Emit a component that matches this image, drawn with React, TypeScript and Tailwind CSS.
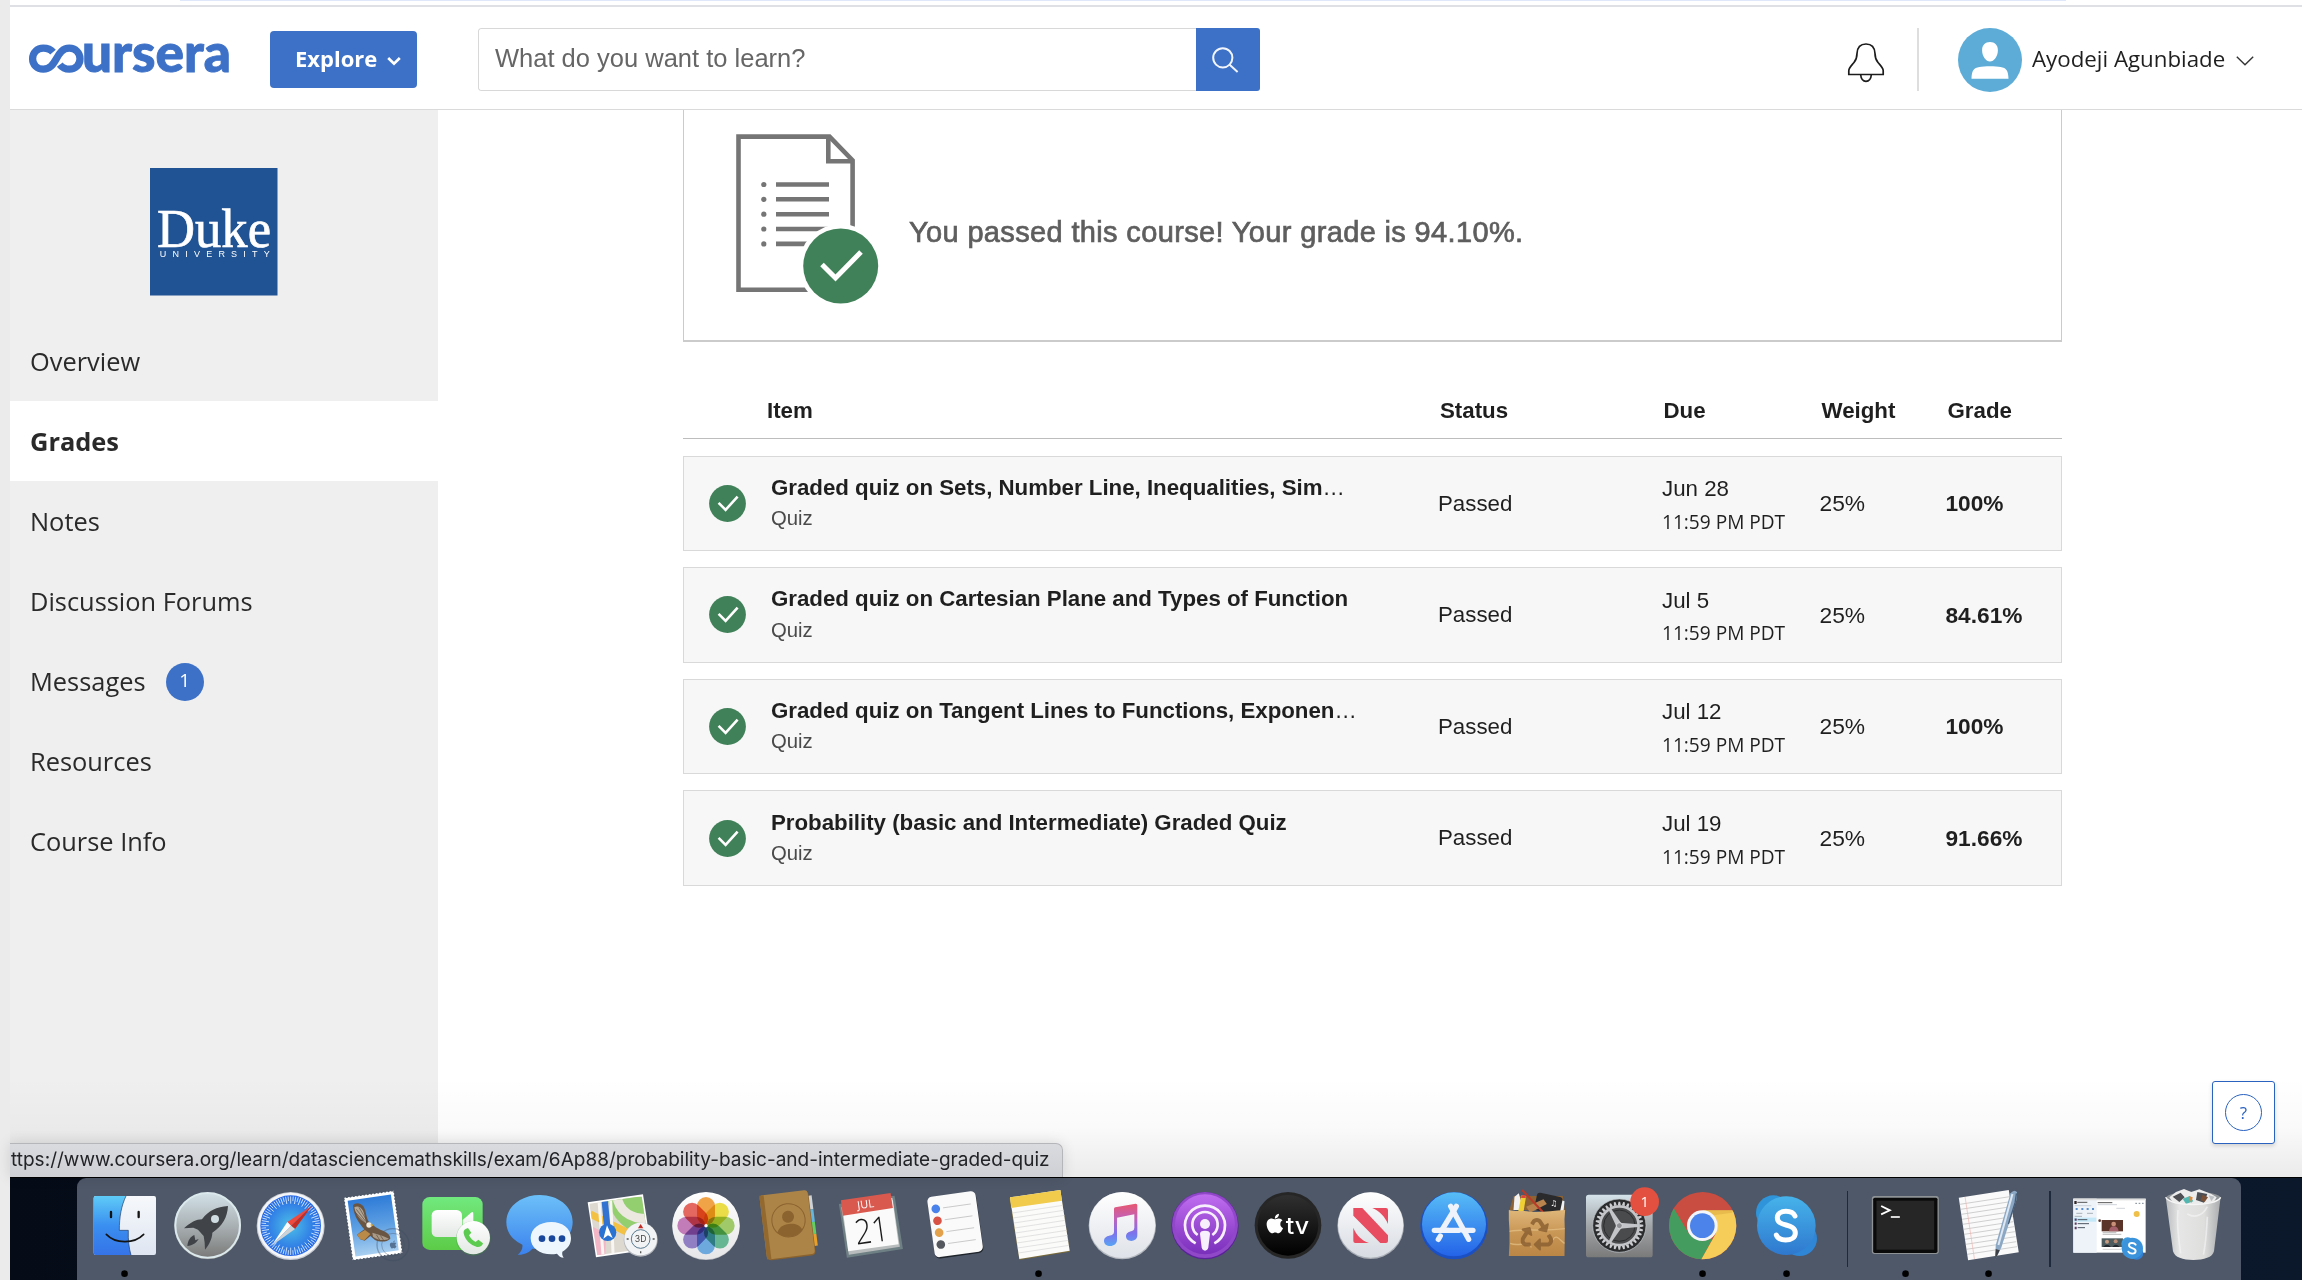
import React from 'react';
import { FaApple, FaRecycle } from 'react-icons/fa';

const HELV = "font-['Liberation_Sans',Arial,sans-serif]";
const OPEN = "font-['Open_Sans',sans-serif]";

/* ---------- Header ---------- */

function CourseraLogo() {
  return (
    <svg className="h-[70px] w-[216px]" viewBox="28 22 216 70" overflow="visible" aria-label="coursera">
      <path
        d="M53 51.2 C50.5 48.2 47 47.2 43.3 47.2 C37 47.2 32.600 51.800 32.600 57.800 C32.600 63.800 37 68.200 43.300 68.200 C50 68.200 53 63.500 56.300 57.800 C59.500 52 62.600 47.200 69.300 47.200 C75.500 47.200 80 51.800 80 57.800 C80 63.800 75.500 68.200 69.300 68.200 C65 68.200 62 66.500 59.800 63.600"
        fill="none"
        stroke="#3d71c7"
        strokeWidth="7.300"
      />
      <text
        x="82"
        y="71"
        textLength="149"
        lengthAdjust="spacingAndGlyphs"
        fill="#3d71c7"
        stroke="#3d71c7"
        strokeWidth="0.900"
        fontFamily="Lato"
        fontWeight="900"
        fontSize="53"
      >
        ursera
      </text>
    </svg>
  );
}

function Header() {
  return (
    <header className="flex h-[103px] shrink-0 items-center border-b-[1.500px] border-[#dadada] bg-white pt-[3px] pl-[18px]">
      <div className="-mt-[3px]">
        <CourseraLogo />
      </div>
      <button className={`${OPEN} ml-[26px] flex h-[57px] w-[147px] items-center rounded-[4px] bg-[#3d71c7] pb-[2px] pl-[25px] text-[22px] font-bold text-white`}>
        Explore
        <svg className="mt-[5px] ml-[10px] h-[10px] w-[14px]" viewBox="0 0 14 10" fill="none" stroke="white" strokeWidth="2.700">
          <path d="M1.200 2 L7 7.600 L12.800 2" />
        </svg>
      </button>
      <div className="ml-[61px] flex h-[63px] w-[782px] overflow-hidden rounded-[3px]">
        <div className={`${HELV} flex flex-1 items-center rounded-l-[3px] border border-r-0 border-[#d8d8d8] pb-[2px] pl-[16px] text-[25.500px] text-[#666666]`}>
          What do you want to learn?
        </div>
        <div className="flex w-[64px] items-center justify-center bg-[#3d71c7]">
          <svg className="mr-[6px] h-[26px] w-[28px]" viewBox="0 0 28 26" fill="none" stroke="#f2f5fb" strokeWidth="2">
            <circle cx="11.800" cy="10.800" r="9.600" />
            <path d="M18.400 17.600 L26.600 25" />
          </svg>
        </div>
      </div>
      <svg className="mt-[5px] ml-[587px] h-[41px] w-[38px]" viewBox="0 0 38 41" fill="none" stroke="#1c1c1c" strokeWidth="1.700">
        <path d="M1.800 32.500 V28.500 C2 25.500 4.500 23.500 7 20.500 C9.500 17.500 10 15 10 11.500 C10.300 5.500 13.500 2 19 2 C24.500 2 27.700 5.500 28 11.500 C28 15 28.500 17.500 31 20.500 C33.500 23.500 36 25.500 36.200 28.500 V32.500 Z" />
        <path d="M13.700 32.800 C13.900 36.500 16 39.300 19 39.300 C22 39.300 24.100 36.500 24.300 32.800" />
      </svg>
      <div className="ml-[32px] h-[63px] w-[2px] bg-[#dedede]" />
      <svg className="ml-[39px] size-[64px]" viewBox="0 0 64 64">
        <circle cx="32" cy="32" r="32" fill="#5dacd7" />
        <path d="M32 14 C27.300 14 24 17 24.100 22.500 C24.200 28.500 28 33.500 32 33.500 C36 33.500 39.800 28.500 39.900 22.500 C40 17 36.700 14 32 14 Z" fill="white" />
        <path d="M13.500 50.800 C13.700 42.500 15.500 39.800 21.500 38.900 C26 38 38 38 42.500 38.900 C48.500 39.800 50.300 42.500 50.500 50.800 Z" fill="white" />
      </svg>
      <span className={`${OPEN} ml-[10px] pb-[1px] text-[22.300px] text-[#1f1f1f]`}>Ayodeji Agunbiade</span>
      <svg className="mt-[3px] ml-[11px] h-[10px] w-[18px]" viewBox="0 0 18 10" fill="none" stroke="#333" strokeWidth="1.400">
        <path d="M0.800 0.800 L9 8.800 L17.200 0.800" />
      </svg>
    </header>
  );
}

/* ---------- Sidebar ---------- */

const NAV = ['Overview', 'Grades', 'Notes', 'Discussion Forums', 'Messages', 'Resources', 'Course Info'];

function Sidebar() {
  return (
    <aside className="w-[427.500px] shrink-0 bg-[#efefef] pt-[58px]">
      <svg className="ml-[140px] block size-[127.500px]" viewBox="0 0 127.500 127.500">
        <rect width="127.500" height="127.500" fill="#205393" />
        <text x="7" y="78.500" textLength="114" lengthAdjust="spacingAndGlyphs" fill="white" stroke="white" strokeWidth="0.700" fontFamily="Liberation Serif" fontSize="54.500">Duke</text>
        <text x="9.800" y="88.600" textLength="110" fill="white" fontFamily="Liberation Sans" fontSize="9">UNIVERSITY</text>
      </svg>
      <nav className="mt-[26px]">
        {NAV.map((label) => (
          <div
            key={label}
            className={`${OPEN} flex h-[79.900px] items-center pl-[20px] text-[25.400px] ${
              label === 'Grades' ? 'bg-white font-bold text-[#2a2a2a]' : 'text-[#2a2a2a]'
            }`}
          >
            {label}
            {label === 'Messages' && (
              <span className="mt-[2px] ml-[20px] flex size-[38px] items-center justify-center rounded-full bg-[#3d71c7] pb-[3px] text-[19px] text-white">
                1
              </span>
            )}
          </div>
        ))}
      </nav>
    </aside>
  );
}

/* ---------- Grades ---------- */

function PassedDocument() {
  return (
    <svg className="h-[176px] w-[150px] shrink-0" viewBox="733 132 150 176" fill="none" stroke="#757575" strokeWidth="4.600">
      <path d="M738.500 136.600 H829.500 L852.600 160.500 V289.700 H738.500 Z" />
      <path d="M828.300 136 V161.300 H853" />
      {[184.5, 199.3, 214.2, 229, 243.9].map((y) => (
        <g key={y}>
          <path d={`M776 ${y} H829`} />
          <circle cx="763.800" cy={y} r="2.600" fill="#757575" stroke="none" />
        </g>
      ))}
      <circle cx="840.700" cy="266" r="42" fill="white" stroke="none" />
      <circle cx="840.700" cy="266" r="37.500" fill="#418159" stroke="none" />
      <path d="M822 264.500 L835.500 278 L861 252" stroke="white" strokeWidth="5" />
    </svg>
  );
}

function CheckBadge() {
  return (
    <svg className="size-[37px]" viewBox="0 0 37 37" fill="none">
      <circle cx="18.500" cy="18.500" r="18.400" fill="#418159" />
      <path d="M9.600 17.800 L16.600 24.800 L28.600 11.600" stroke="white" strokeWidth="2.600" />
    </svg>
  );
}

const ROWS = [
  { title: 'Graded quiz on Sets, Number Line, Inequalities, Sim', cut: true, due: 'Jun 28', grade: '100%' },
  { title: 'Graded quiz on Cartesian Plane and Types of Function', cut: false, due: 'Jul 5', grade: '84.61%' },
  { title: 'Graded quiz on Tangent Lines to Functions, Exponen', cut: true, due: 'Jul 12', grade: '100%' },
  { title: 'Probability (basic and Intermediate) Graded Quiz', cut: false, due: 'Jul 19', grade: '91.66%' },
];

function Grades() {
  return (
    <main className={`${HELV} w-[1379px] shrink-0 text-[22.300px] text-[#1f1f1f]`}>
      <section className="flex h-[232px] border-x border-b-2 border-[#cbcbcb] pl-[49px]">
        <div className="mt-[22px]">
          <PassedDocument />
        </div>
        <p className="mt-[102px] ml-[26px] h-[40px] text-[29px] leading-[40px] tracking-[0.350px] whitespace-nowrap text-[#5e5e5e] [-webkit-text-stroke:0.700px_#5e5e5e]">
          You passed this course! Your grade is 94.10%.
        </p>
      </section>
      <div className="grid h-[96.500px] grid-cols-[673px_223.500px_158px_126px_1fr] border-b border-[#bdbdbd] pt-[55px] pl-[84px] leading-[27px] font-bold">
        <span>Item</span>
        <span>Status</span>
        <span>Due</span>
        <span>Weight</span>
        <span>Grade</span>
      </div>
      <div className="mt-[17px] flex flex-col gap-[16px]">
        {ROWS.map((r) => (
          <div
            key={r.due}
            className="grid h-[95.600px] grid-cols-[62px_667px_224px_157.500px_126px_1fr] items-center border border-[#d9d9d9] bg-[#f7f7f7] pl-[25px]"
          >
            <CheckBadge />
            <div className="leading-[31.400px]">
              <div className="tracking-[-0.020px] font-bold">
                {r.title}
                {r.cut && <span className="font-normal">…</span>}
              </div>
              <div className="text-[20.300px] text-[#4a4a4a]">Quiz</div>
            </div>
            <span>Passed</span>
            <div className="pt-[5px] leading-[32.700px]">
              <div>{r.due}</div>
              <div className={`${OPEN} text-[19.100px]`}>11:59 PM PDT</div>
            </div>
            <span className="text-[22.800px]">25%</span>
            <span className="text-[22.700px] font-bold">{r.grade}</span>
          </div>
        ))}
      </div>
    </main>
  );
}

/* ---------- Dock icons ---------- */

function Icon({ box, dot, children }: { box: string; dot?: boolean; children: React.ReactNode }) {
  const [x, y, w] = box.split(' ').map(Number);
  return (
    <svg className="h-[102px] w-[83.090px] shrink-0" viewBox={`${box} 306`} overflow="visible">
      {children}
      {dot && <circle cx={x + w / 2} cy={y + 287} r="10" fill="black" />}
    </svg>
  );
}

function Grad({ id, stops }: { id: string; stops: string[] }) {
  return (
    <linearGradient id={id} x1="0" y1="0" x2="0" y2="1">
      {stops.map((c, i) => (
        <stop key={i} offset={i / (stops.length - 1)} stopColor={c} />
      ))}
    </linearGradient>
  );
}

const ticks = (n: number) => Array.from({ length: n }, (_, i) => (i * 360) / n);

function Finder() {
  return (
    <Icon box="249 174 249.270" dot>
      <Grad id="fl" stops={['#5fcbf7', '#3a8ff0', '#3573e8']} />
      <Grad id="fr" stops={['#f6f8fb', '#dfe6f2']} />
      <rect x="281" y="228" width="187" height="177" rx="6" fill="url(#fr)" />
      <path d="M287 228 H378 C364 258 358 290 358 331 H385 C384 360 387 385 393 405 H287 Q281 405 281 399 V234 Q281 228 287 228 Z" fill="url(#fl)" />
      <path d="M378 228 C364 258 358 290 358 331 H385 C384 360 387 385 393 405" fill="none" stroke="#1d3a66" strokeWidth="2" />
      <path d="M333 276 V291 M416 276 V291" stroke="#141414" strokeWidth="7" strokeLinecap="round" />
      <path d="M319 343 C345 371 402 373 431 343" fill="none" stroke="#141414" strokeWidth="5" strokeLinecap="round" />
    </Icon>
  );
}

function Launchpad() {
  return (
    <Icon box="498 174 249.270">
      <Grad id="lp" stops={['#d3e2e8', '#a9b0b3', '#777775']} />
      <circle cx="623" cy="318" r="100" fill="url(#lp)" />
      <circle cx="623" cy="316" r="97" fill="none" stroke="#dbe8ec" strokeWidth="6" />
      <path d="M684 258 C650 260 625 272 606 298 C590 298 570 308 552 325 L580 323 L594 329 L611 348 L614 368 L615 389 C628 372 636 358 637 338 C668 318 682 292 684 258 Z" fill="#404347" />
      <circle cx="645" cy="297" r="12" fill="#cfdde2" />
      <path d="M583 345 C570 350 564 362 562 378 C578 376 590 368 596 357 L586 361 Z" fill="#404347" />
    </Icon>
  );
}

function Safari() {
  return (
    <Icon box="747 174 249.270">
      <radialGradient id="sf">
        <stop offset="0" stopColor="#4cbfe6" />
        <stop offset="1" stopColor="#2767e6" />
      </radialGradient>
      <circle cx="872" cy="318" r="102" fill="#c9ccd4" />
      <circle cx="872" cy="317" r="99" fill="#f4f5f7" />
      <circle cx="872" cy="317" r="91" fill="url(#sf)" />
      {ticks(72).map((a, i) => (
        <path key={a} d={i % 2 ? 'M872 229 V243' : 'M872 229 V251'} stroke="#d6eafa" strokeWidth="2.500" transform={`rotate(${a} 872 317)`} />
      ))}
      <path d="M936 257 L862 306 L873 317 Z" fill="#f04a3e" />
      <path d="M936 257 L873 317 L885 327 Z" fill="#c52d24" />
      <path d="M814 378 L862 306 L873 317 Z" fill="#fafafa" />
      <path d="M814 378 L873 317 L885 327 Z" fill="#cfd2d4" />
    </Icon>
  );
}

function Mail() {
  return (
    <Icon box="997 174 249.270">
      <Grad id="ml" stops={['#2e7bd8', '#5d9fe2', '#a8cff0']} />
      <g transform="rotate(-8 1121 316)">
        <rect x="1045" y="222" width="151" height="189" fill="white" />
        <rect x="1044" y="221" width="153" height="191" fill="none" stroke="#4e5868" strokeWidth="6" strokeDasharray="0 10.500" strokeLinecap="round" />
        <rect x="1055" y="232" width="131" height="169" fill="url(#ml)" />
      </g>
      <circle cx="1180" cy="374" r="48" fill="none" stroke="#3e4c61" strokeOpacity=".4" strokeWidth="4" />
      <circle cx="1180" cy="374" r="34" fill="none" stroke="#3e4c61" strokeOpacity=".35" strokeWidth="3" />
      <path d="M1060 256 C1066 246 1084 248 1092 260 C1100 275 1099 292 1108 306 C1118 312 1128 325 1150 332 C1162 337 1172 344 1172 356 C1160 368 1140 366 1126 360 L1112 348 L1095 362 L1082 358 L1072 344 L1094 328 C1080 312 1062 290 1060 256 Z" fill="#6a5442" />
      <path d="M1064 262 C1072 256 1084 260 1090 272 C1095 284 1096 296 1100 310 C1086 304 1068 286 1064 262 Z" fill="#b3a797" />
      <path d="M1070 268 L1098 304 M1078 262 L1099 298 M1066 276 L1096 308" stroke="#5a4a3c" strokeWidth="2" />
      <path d="M1118 338 C1135 343 1150 346 1168 356 C1150 364 1134 360 1120 350 Z" fill="#a99a88" />
      <path d="M1130 344 L1140 360 M1142 346 L1152 361" stroke="#5a4a3c" strokeWidth="2" />
      <path d="M1072 344 L1096 330 L1112 342 L1094 361 L1082 358 Z" fill="#b98a48" />
      <circle cx="1108" cy="315" r="8" fill="#f0ebe2" />
      <path d="M1113 312 L1123 315 L1114 320 Z" fill="#e2ac34" />
      <FaApple x={1167} y={360} size={27} color="#3a516f" opacity={0.7} />
    </Icon>
  );
}

function FaceTime() {
  return (
    <Icon box="1246 174 249.270">
      <Grad id="ft" stops={['#72e97e', '#5ccb48']} />
      <Grad id="fw" stops={['#ffffff', '#e3e8e4']} />
      <rect x="1268" y="231" width="181" height="159" rx="22" fill="url(#ft)" />
      <path d="M1389 300 L1414 278 Q1421 273 1421 282 V340 L1389 318 Z" fill="url(#fw)" />
      <rect x="1296" y="270" width="91" height="81" rx="16" fill="url(#fw)" />
      <circle cx="1421" cy="355" r="52" fill="#3d9a3a" opacity=".35" />
      <circle cx="1421" cy="353" r="50" fill="url(#fw)" />
      <path d="M1398 327 L1405 324 L1415 338 L1408 346 C1412 355 1420 362 1428 366 L1436 359 L1450 370 C1449 378 1440 382 1432 381 C1412 376 1396 360 1392 340 C1391 334 1393 330 1398 327 Z" fill="#5ccb50" />
    </Icon>
  );
}

function Messages() {
  return (
    <Icon box="-5 174 249.270">
      <Grad id="mg" stops={['#6cc0f8', '#3b82ee']} />
      <path d="M120 225 C65 225 20 259 20 306 C20 337 38 360 68 374 C70 386 64 396 54 404 C74 405 88 397 98 386 C160 394 219 362 219 306 C219 259 175 225 120 225 Z" fill="url(#mg)" />
      <path d="M155 306 C120 306 93 326 93 354 C93 383 120 403 155 403 C160 403 166 402 172 401 C177 408 184 413 192 413 C188 407 187 402 188 395 C205 386 214 372 214 354 C214 326 189 306 155 306 Z" fill="#eef6fd" />
      {[127, 157, 187].map((x) => (
        <circle key={x} cx={x} cy="356" r="10" fill="#19479c" />
      ))}
    </Icon>
  );
}

function Maps() {
  return (
    <Icon box="245 174 249.270">
      <path d="M265 247 L431 223 L456 388 L290 412 Z" fill="white" />
      <clipPath id="mapc">
        <path d="M270 251 L427 229 L450 384 L294 406 Z" />
      </clipPath>
      <g clipPath="url(#mapc)">
        <rect x="260" y="220" width="200" height="200" fill="#ded9d0" />
        <path d="M325 230 H450 V330 H390 C360 310 330 280 325 230 Z" fill="#93cf6f" />
        <path d="M352 225 C357 265 385 298 450 296" fill="none" stroke="#ece8e0" strokeWidth="28" />
        <path d="M272 282 L400 345" stroke="#f3c244" strokeWidth="22" />
        <path d="M280 320 L320 340 L318 410 H285 Z" fill="#f3b6c6" />
        <path d="M299 240 L312 420 M334 240 L342 420" stroke="#f8f6f2" strokeWidth="9" />
        <path d="M316 240 L325 335" stroke="#3273d2" strokeWidth="19" />
      </g>
      <circle cx="325" cy="337" r="26" fill="#2b73d2" />
      <path d="M323 316 L340 354 L326 346 L312 356 Z" fill="white" />
      <circle cx="424" cy="359" r="51" fill="#b5b8be" />
      <circle cx="424" cy="357" r="49" fill="#f2f3f5" />
      <circle cx="424" cy="357" r="28" fill="none" stroke="#56788f" strokeWidth="3" />
      <text x="424" y="367" textAnchor="middle" fontFamily="Inter" fontSize="26" fill="#444">3D</text>
      <path d="M424 312 L432 325 H416 Z" fill="#c62b23" />
      <path d="M424 394 v6 M382 357 h6 M460 357 h6" stroke="#555" strokeWidth="4" />
    </Icon>
  );
}

const PETALS = ['#f0962e', '#e8d92e', '#94c356', '#54ae86', '#5c9fdc', '#8371bd', '#bb6bb0', '#e2534a'];

function Photos() {
  return (
    <Icon box="494 174 249.270">
      <Grad id="ph" stops={['#ffffff', '#e6e6e8']} />
      <circle cx="617" cy="319" r="101" fill="#b9bcc2" />
      <circle cx="617" cy="317" r="101" fill="url(#ph)" />
      <g className="isolate">
        {PETALS.map((c, i) => (
          <rect key={c} x="590" y="231" width="54" height="84" rx="27" fill={c} opacity=".88" className="mix-blend-multiply" transform={`rotate(${i * 45} 617 317)`} />
        ))}
      </g>
      <circle cx="617" cy="317" r="5" fill="white" />
    </Icon>
  );
}

function Contacts() {
  return (
    <Icon box="743 174 249.270">
      <g transform="rotate(-7 865 313)">
        <rect x="930" y="235" width="14" height="42" fill="#cfd3d6" />
        <rect x="930" y="277" width="14" height="38" fill="#63b6de" />
        <rect x="930" y="315" width="14" height="36" fill="#62cf62" />
        <rect x="930" y="351" width="14" height="36" fill="#e8a02a" />
        <rect x="790" y="220" width="145" height="194" rx="12" fill="#8a622e" />
        <rect x="788" y="217" width="145" height="193" rx="10" fill="#ad8448" />
        <path d="M788 217 H801 V410 H788 Z" fill="#94692f" />
        <circle cx="866" cy="301" r="50" fill="none" stroke="#8b632f" strokeWidth="3" />
        <circle cx="866" cy="290" r="18" fill="#8b632f" />
        <path d="M828 334 C836 316 850 312 866 312 C882 312 896 316 904 334 C885 356 846 356 828 334 Z" fill="#8b632f" />
      </g>
    </Icon>
  );
}

function Calendar() {
  return (
    <Icon box="992.300 174 249.270">
      <path d="M1016 252 L1183 227 L1208 387 L1040 413 Z" fill="#6f8085" />
      <path d="M1023 262 L1178 240 L1199 380 L1046 404 Z" fill="#b9bcbc" />
      <path d="M1026 256 L1176 234 L1195 373 L1044 394 Z" fill="#fafafa" />
      <path d="M1022 241 L1171 219 L1178 264 L1028 287 Z" fill="#d9594f" />
      <g transform="rotate(-8 1110 310)">
        <text x="1104" y="263" textAnchor="middle" fontFamily="Open Sans" fontSize="33" fill="white">JUL</text>
        <text x="1111" y="368" textAnchor="middle" textLength="101" lengthAdjust="spacingAndGlyphs" fontFamily="Open Sans" fontWeight="300" fontSize="104" fill="#1a1a1a">21</text>
      </g>
    </Icon>
  );
}

function Reminders() {
  return (
    <Icon box="1241.600 174 249.270">
      <g transform="rotate(-8 1365 313)">
        <rect x="1293" y="225" width="146" height="183" rx="14" fill="#1f242b" />
        <rect x="1292" y="221" width="146" height="183" rx="14" fill="#fafafa" />
        {['#4a82ec', '#d85246', '#e3a14c', '#55595f'].map((c, i) => (
          <g key={c}>
            <circle cx="1314" cy={259 + i * 36} r="13" fill={c} />
            <path d={`M1336 ${259 + i * 36} H1420`} stroke="#b5b5b5" strokeWidth="2" />
          </g>
        ))}
      </g>
    </Icon>
  );
}

function Notes() {
  return (
    <Icon box="81 54 249.270" dot>
      <path d="M118 114 L271 91 L300 275 L148 300 Z" fill="#7a6b3a" />
      <path d="M120 112 L271 90 L299 272 L148 297 Z" fill="#fbfbfa" />
      <path d="M120 112 L271 90 L276 122 L124 144 Z" fill="#f0cb4c" />
      {[0, 1, 2, 3, 4, 5, 6, 7, 8].map((i) => (
        <path key={i} d={`M${127 + i * 2.3} ${159 + i * 15} l152 -23`} stroke="#d5d5d5" strokeWidth="2" />
      ))}
    </Icon>
  );
}

function Music() {
  return (
    <Icon box="330 54 249.270">
      <Grad id="mu" stops={['#ffffff', '#dfe2e8']} />
      <linearGradient id="mn" gradientUnits="userSpaceOnUse" x1="460" y1="130" x2="460" y2="258">
        <stop offset="0" stopColor="#e8576e" />
        <stop offset=".35" stopColor="#c261b8" />
        <stop offset=".7" stopColor="#7c72ec" />
        <stop offset="1" stopColor="#58a4f4" />
      </linearGradient>
      <circle cx="457" cy="197" r="101" fill="#b4b8bf" />
      <circle cx="457" cy="195" r="99" fill="url(#mu)" />
      <path d="M432 147 Q432 143 436 142 L497 131 Q502 131 502 136 V226 C502 237 493 243 484 243 C475 243 468 238 468 229 C468 219 477 215 486 213 Q493 211 493 203 V163 L441 173 V240 C441 251 431 258 421 258 C410 258 402 252 402 243 C402 232 412 228 424 226 Q432 224 432 216 Z" fill="url(#mn)" />
    </Icon>
  );
}

function Podcasts() {
  return (
    <Icon box="580 54 249.270">
      <Grad id="pc" stops={['#c06df0', '#7a2fbb']} />
      <circle cx="706" cy="197" r="101" fill="#5a2199" />
      <circle cx="706" cy="195" r="99" fill="#9047c8" />
      <circle cx="706" cy="193" r="90" fill="url(#pc)" />
      <g fill="none" stroke="#f7f0fc" strokeWidth="8">
        <path d="M678 250 A60 60 0 1 1 734 250" />
        <path d="M684 225 A38 38 0 1 1 728 225" />
      </g>
      <circle cx="706" cy="192" r="15" fill="#f7f0fc" />
      <path d="M691 222 Q691 212 706 212 Q721 212 721 222 L716 262 Q714 272 706 272 Q698 272 696 262 Z" fill="#f7f0fc" />
    </Icon>
  );
}

function AppleTv() {
  return (
    <Icon box="829 54 249.270">
      <Grad id="tv" stops={['#303030', '#000000']} />
      <circle cx="955" cy="196" r="100" fill="#262626" />
      <circle cx="955" cy="196" r="91" fill="url(#tv)" />
      <FaApple x={882} y={157} size={67} color="white" />
      <text x="948" y="221" textLength="70" lengthAdjust="spacingAndGlyphs" fontFamily="Inter" fontWeight="500" fontSize="69" fill="white">tv</text>
    </Icon>
  );
}

function News() {
  return (
    <Icon box="1078 54 249.270">
      <Grad id="nw" stops={['#ffffff', '#d7dbe2']} />
      <circle cx="1203" cy="197" r="100" fill="#a9adb5" />
      <circle cx="1203" cy="195" r="98" fill="url(#nw)" />
      <path d="M1151 144 H1178 L1255 226 V243 Q1255 249 1249 249 H1232 L1151 167 Z M1208 144 H1249 Q1255 144 1255 150 V192 C1246 170 1230 154 1208 144 Z M1151 203 C1160 226 1176 241 1198 249 H1157 Q1151 249 1151 243 Z" fill="#e84c60" />
    </Icon>
  );
}

function AppStore() {
  return (
    <Icon box="37 54 249.270">
      <Grad id="as" stops={['#57bdf7', '#2463e8']} />
      <circle cx="163" cy="197" r="101" fill="#1b4fc4" />
      <circle cx="163" cy="193" r="96" fill="url(#as)" />
      <g stroke="#eef3fb" strokeWidth="16" strokeLinecap="round" fill="none">
        <path d="M170 139 L128 208" />
        <path d="M153 139 L207 238" />
        <path d="M104 211 H146 M190 211 H220" />
        <path d="M140 211 H178" />
        <path d="M122 228 L116 238" />
      </g>
    </Icon>
  );
}

function PaperBag() {
  return (
    <Icon box="286.500 54 249.270">
      <Grad id="bg" stops={['#dfb679', '#c89655', '#bb8646']} />
      <path d="M330 150 L342 108 H490 L496 150 Z" fill="#8e6232" />
      <path d="M345 110 L358 100 L372 150 H342 Z" fill="#f2f2f2" />
      <path d="M485 120 L495 124 L492 155 H478 Z" fill="#f2f2f2" />
      <rect x="408" y="104" width="78" height="54" rx="9" fill="#2a2a2c" transform="rotate(12 447 130)" />
      <text x="452" y="138" fontSize="24" fill="white" fontFamily="DejaVu Sans">♫</text>
      <path d="M380 140 L432 118 L442 132 L392 158 Z" fill="#b8834c" />
      <path d="M366 106 L380 108 L372 155 H356 Z" fill="#efcf33" />
      <path d="M366 106 h13 v8 h-14 Z" fill="#e0453a" />
      <path d="M368 90 L430 156" stroke="#b93a28" strokeWidth="6" />
      <path d="M328 150 C350 156 372 150 392 155 C420 158 460 152 497 150 L495 178 L496 214 L495 288 H328 L330 250 V214 L328 180 Z" fill="url(#bg)" />
      <path d="M330 214 C380 204 420 216 496 206 M332 250 C360 262 380 240 396 262 M460 240 C470 220 480 240 495 250" fill="none" stroke="#e6c288" strokeWidth="4" opacity=".7" />
      <FaRecycle x={363} y={174} size={98} color="#8d6232" opacity={0.85} />
    </Icon>
  );
}

function Preferences() {
  return (
    <Icon box="536 54 249.270">
      <Grad id="sp" stops={['#d5e3ea', '#a2a5a8', '#7a7a7a']} />
      <rect x="560" y="104" width="200" height="188" rx="8" fill="url(#sp)" />
      <circle cx="660" cy="197" r="80" fill="#2b2c2e" stroke="#c5ccd0" strokeWidth="2" />
      {ticks(32).map((a) => (
        <path key={a} d="M655.500 136 L657.500 125 H662.500 L664.500 136 Z" fill="#cbcdd0" transform={`rotate(${a} 660 197)`} />
      ))}
      <circle cx="660" cy="197" r="58" fill="#4a4b4d" stroke="#c3c5c8" strokeWidth="8" />
      <circle cx="660" cy="197" r="47" fill="none" stroke="#2b2c2e" strokeWidth="3" />
      {[90, 210, 330].map((a) => (
        <path key={a} d="M651 197 L656 140 H664 L669 197 Z" fill="#c3c5c8" transform={`rotate(${a} 660 197)`} />
      ))}
      <circle cx="660" cy="197" r="9" fill="#8e9093" stroke="#d5d7da" strokeWidth="3" />
      <circle cx="736" cy="125" r="43" fill="#e4503f" />
      <text x="736" y="141" textAnchor="middle" fontFamily="Open Sans" fontSize="44" fill="white">1</text>
    </Icon>
  );
}

function Chrome() {
  return (
    <Icon box="785 54 249.270" dot>
      <clipPath id="chc">
        <circle cx="910" cy="197" r="101" />
      </clipPath>
      <g clipPath="url(#chc)">
        <rect x="805" y="90" width="210" height="210" fill="#c94d41" />
        <path d="M800 105 L826 149 L869 221 L910 244 L940 235 L900 310 H800 Z" fill="#459c5f" />
        <path d="M910 151 H1020 V305 H902 L949 221 L952 180 Z" fill="#f6cd59" />
        <path d="M910 151 H1000 L998 158 L925 168 Z" fill="#d9a93f" opacity=".5" />
      </g>
      <circle cx="909" cy="197" r="46" fill="#f3f5f8" />
      <circle cx="909" cy="197" r="37" fill="#4c83ea" />
    </Icon>
  );
}

function Skype() {
  return (
    <Icon box="1034 54 249.270" dot>
      <Grad id="sk" stops={['#46b3ea', '#2f78cf']} />
      <circle cx="1119" cy="158" r="52" fill="#2f94d9" />
      <circle cx="1198" cy="236" r="52" fill="#2f86d6" />
      <circle cx="1158" cy="197" r="88" fill="url(#sk)" />
      <path d="M1184 168 C1179 157 1168 154 1157 154 C1142 154 1131 161 1131 173 C1131 203 1185 187 1185 219 C1185 233 1172 240 1156 240 C1142 240 1132 235 1128 225" fill="none" stroke="white" strokeWidth="15" strokeLinecap="round" />
    </Icon>
  );
}

function Terminal() {
  return (
    <Icon box="132.500 354 249.270" dot>
      <rect x="156" y="408" width="201" height="174" rx="8" fill="#8e9294" />
      <rect x="160" y="413" width="193" height="166" rx="5" fill="#0a0a0a" />
      <rect x="170" y="422" width="173" height="147" fill="#262626" />
      <path d="M184 438 L210 451 L184 463" fill="none" stroke="white" strokeWidth="5.500" />
      <path d="M213 471 H240" stroke="white" strokeWidth="5" />
    </Icon>
  );
}

function TextEdit() {
  return (
    <Icon box="381.700 354 249.270" dot>
      <path d="M417 413 L567 390 L597 577 L445 601 Z" fill="#fafafa" />
      {[0, 1, 2, 3, 4, 5, 6, 7, 8, 9, 10].map((i) => (
        <path key={i} d={`M${420 + i * 2.2} ${433 + i * 15} l150 -23`} stroke="#a9a9a9" strokeWidth="1.600" />
      ))}
      <path d="M436 411 L464 597" stroke="#f0b5b0" strokeWidth="2" />
      <path d="M572 400 Q584 386 592 397 L590 420 L545 562 L526 600 L528 555 Z" fill="#8ba7c4" />
      <path d="M578 402 L536 555" stroke="#dde8f3" strokeWidth="6" />
      <path d="M590 400 L586 428 L566 492" fill="none" stroke="#465d78" strokeWidth="4" />
      <path d="M528 567 L540 571 L526 600 Z" fill="#3c4046" />
    </Icon>
  );
}

function SkypeWindow() {
  return (
    <Icon box="745 354 249.270">
      <rect x="761" y="416" width="217" height="162" fill="white" />
      <rect x="761" y="416" width="70" height="162" fill="#eef3f9" />
      <rect x="761" y="416" width="217" height="5" fill="#dedede" />
      <rect x="764" y="423" width="7" height="9" fill="#33272b" />
      <path d="M773 427 H803 M834 428 H878" stroke="#555" strokeWidth="3" />
      <path d="M834 434 H892 M765 437 H815 M890 445 H916" stroke="#b9c0c8" strokeWidth="2" />
      <path d="M768 447 h6 M785 447 h6 M801 447 h6 M817 447 h6" stroke="#5a8fd0" strokeWidth="6" />
      <path d="M770 460 h18 M802 460 h18 M765 469 h22" stroke="#9aa3ad" strokeWidth="2.500" />
      <rect x="763" y="473" width="67" height="12" fill="#c4e8f8" />
      <path d="M774 479 H803 M774 491 H808 M774 503 H796" stroke="#4a5561" strokeWidth="3" />
      <path d="M765 479 h6 M765 491 h6 M765 504 h6" stroke="#5b3a63" strokeWidth="7" />
      <rect x="846" y="480" width="64" height="34" fill="#5a3428" />
      <circle cx="882" cy="492" r="7" fill="#c99079" />
      <path d="M868 514 Q870 499 882 499 Q895 499 897 514 Z" fill="#a5616b" />
      <path d="M849 518 H890 M849 523 H905" stroke="#999" strokeWidth="2" />
      <rect x="846" y="535" width="64" height="26" fill="#4d5a5e" />
      <circle cx="862" cy="545" r="6" fill="#c79a80" />
      <circle cx="888" cy="544" r="6" fill="#b98d75" />
      <path d="M850 561 Q862 548 874 561 M878 561 Q888 548 900 561" fill="#22282e" />
      <circle cx="951" cy="462" r="9" fill="#efc04a" />
      <path d="M947 430 h5 M957 430 h5 M967 430 h5" stroke="#7a8794" strokeWidth="3" />
      <circle cx="840" cy="482" r="4" fill="#5b3a33" />
      <path d="M849 568 H905" stroke="#bbb" strokeWidth="2" />
      <circle cx="924" cy="551" r="19" fill="#3d9bdf" />
      <circle cx="951" cy="579" r="20" fill="#3280d4" />
      <circle cx="938" cy="565" r="32" fill="#3b93dc" />
      <path d="M948 554 C945 550 941 549 937 549 C932 549 928 552 928 556 C928 567 948 561 948 573 C948 579 943 581 938 581 C932 581 928 579 926 575" fill="none" stroke="white" strokeWidth="5.500" strokeLinecap="round" />
    </Icon>
  );
}

function Trash() {
  return (
    <Icon box="994 354 249.270">
      <linearGradient id="tr">
        <stop offset="0" stopColor="#b9bbbd" />
        <stop offset=".25" stopColor="#e6e6e6" />
        <stop offset=".7" stopColor="#dededd" />
        <stop offset="1" stopColor="#a9abad" />
      </linearGradient>
      <ellipse cx="1118" cy="414" rx="82" ry="19" fill="#8f9498" />
      <path d="M1046 412 L1066 396 L1090 387 L1112 396 L1136 388 L1172 402 L1188 412 L1176 432 H1060 Z" fill="#ececec" />
      <path d="M1056 410 L1080 398 L1092 412 L1076 426 Z M1130 396 L1160 402 L1150 428 L1126 420 Z" fill="#4d4f55" />
      <path d="M1086 416 L1108 408 L1118 424 L1096 432 Z" fill="#54b6b0" />
      <path d="M1104 408 L1116 412 L1112 430 Z" fill="#de8a3e" />
      <path d="M1146 404 l16 8 l-10 14 l-12 -6 Z" fill="#7a5136" />
      <path d="M1164 406 L1182 410 L1172 424 Z" fill="#bfc2c5" />
      <path d="M1035 410 C1048 440 1186 440 1200 410 L1180 574 C1176 592 1150 600 1118 600 C1086 600 1062 592 1057 574 Z" fill="url(#tr)" />
      <path d="M1035 412 C1048 441 1186 441 1200 412" fill="none" stroke="#f6f6f6" strokeWidth="4" />
      <path d="M1100 462 C1130 478 1150 460 1160 440 M1072 450 C1068 490 1074 540 1080 580 M1160 470 C1158 510 1156 550 1148 584" fill="none" stroke="#f7f7f7" strokeWidth="5" opacity=".6" />
    </Icon>
  );
}

function Dock() {
  return (
    <div className="flex h-[103.500px] shrink-0 border-t-[1.500px] border-black bg-gradient-to-r from-[#050c18] to-[#0b182b] pl-[67px]">
      <div className="flex w-[2163.500px] rounded-t-[9px] bg-[#4e5868] pl-[5.960px]">
        <Finder />
        <Launchpad />
        <Safari />
        <Mail />
        <FaceTime />
        <Messages />
        <Maps />
        <Photos />
        <Contacts />
        <Calendar />
        <Reminders />
        <Notes />
        <Music />
        <Podcasts />
        <AppleTv />
        <News />
        <AppStore />
        <PaperBag />
        <Preferences />
        <Chrome />
        <Skype />
        <div className="mt-[13px] mr-[16.200px] ml-[19px] h-[76px] w-[1.500px] shrink-0 bg-[#1c2a3c]" />
        <Terminal />
        <TextEdit />
        <div className="mt-[13px] mr-[17.500px] ml-[19px] h-[76px] w-[1.500px] shrink-0 bg-[#1c2a3c]" />
        <SkypeWindow />
        <Trash />
      </div>
    </div>
  );
}

/* ---------- Page ---------- */

export default function App() {
  return (
    <div className="flex h-[1280px] w-[2302px] overflow-hidden bg-white">
      <div className="w-[10px] shrink-0 bg-[#ebebeb]" />
      <div className="relative flex min-w-0 flex-1 flex-col">
        <div className="h-[7px] shrink-0 border-b-2 border-[#dfe0e5]">
          <div className="ml-[170px] h-px w-[1886px] bg-[#dfe7fa]" />
        </div>
        <Header />
        <div className="flex min-h-0 flex-1">
          <Sidebar />
          <div className="flex-1 pl-[245.500px]">
            <Grades />
          </div>
        </div>
        <Dock />
        <div className="pointer-events-none absolute right-0 bottom-[103.500px] left-0 h-[100px] bg-gradient-to-b from-transparent via-black/[0.02] to-black/[0.08]" />
        <div className="absolute bottom-[103.500px] left-0 flex h-[34px] w-[1053px] items-center overflow-hidden rounded-tr-[7px] border-t-[1.500px] border-r border-[#b5b6b9] bg-gradient-to-b from-[#dadbdf] to-[#cfd0d5] pl-[1px] font-['Inter',sans-serif] text-[19.030px] whitespace-nowrap text-[#222327] shadow-[0_0_14px_rgba(0,0,0,0.12)]">
          ttps://www.coursera.org/learn/datasciencemathskills/exam/6Ap88/probability-basic-and-intermediate-graded-quiz
        </div>
        <button className="absolute top-[1081px] right-[27px] flex size-[63px] items-center justify-center rounded-[3px] border-[1.500px] border-[#2a62c0] bg-white shadow-[0_2px_4px_rgba(0,0,0,0.15)]">
          <span className={`${OPEN} flex size-[37px] items-center justify-center rounded-full border-[1.500px] border-[#2a62c0] text-[17px] text-[#2a62c0]`}>
            ?
          </span>
        </button>
      </div>
    </div>
  );
}
